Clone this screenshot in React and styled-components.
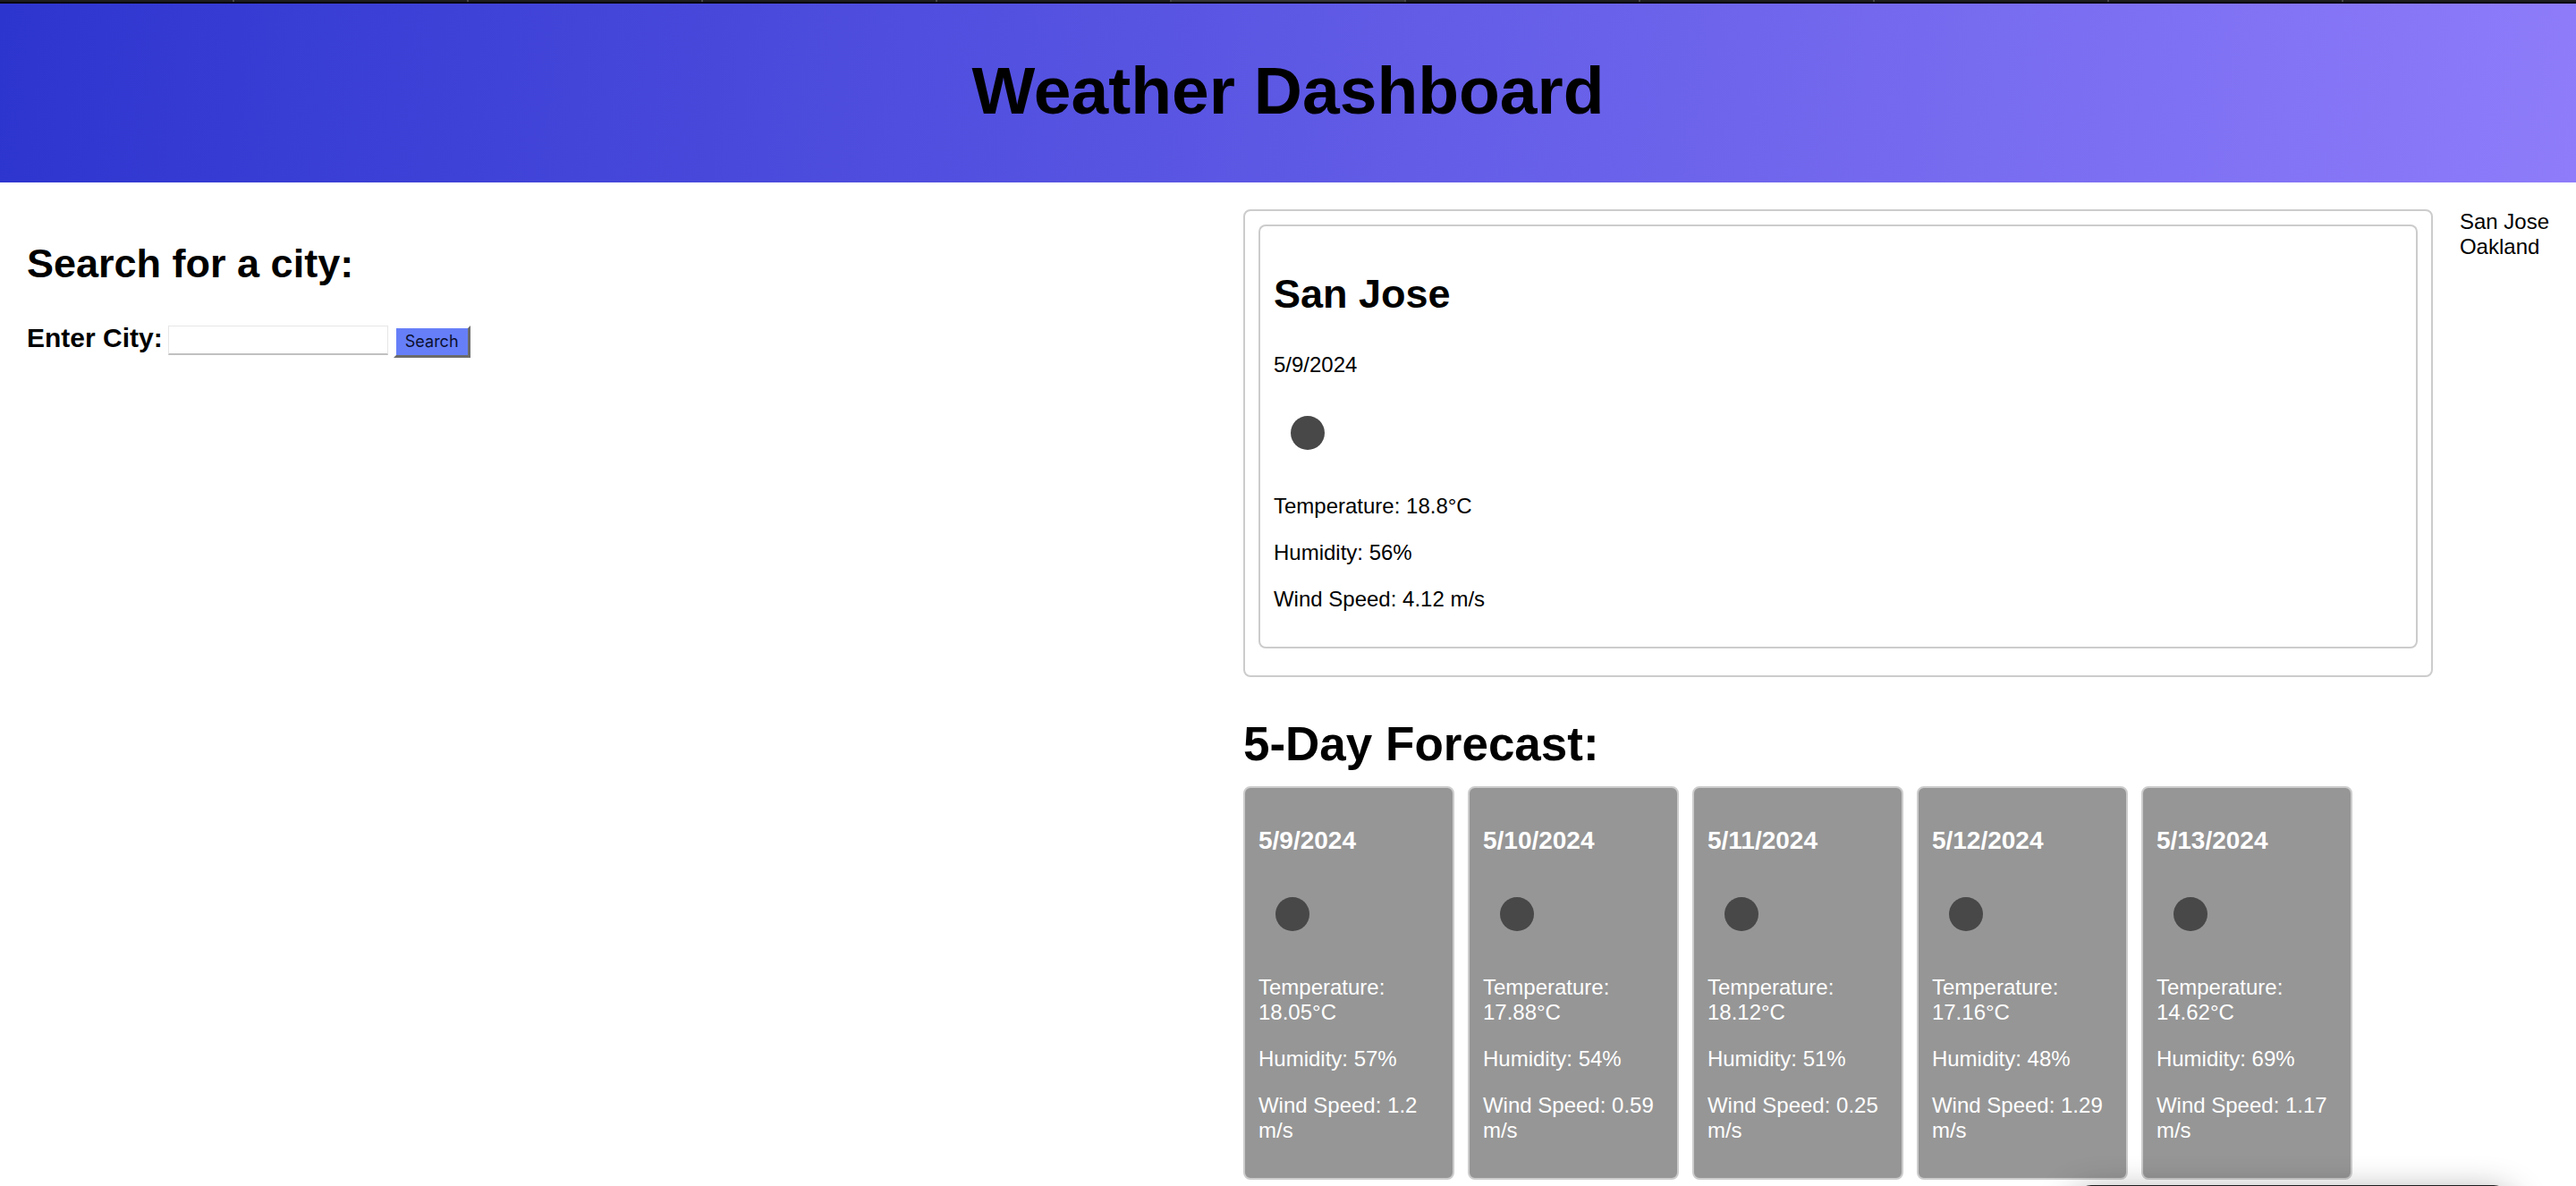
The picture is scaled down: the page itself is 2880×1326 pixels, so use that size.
import React, { useState } from "react";
import styled, { createGlobalStyle } from "styled-components";

const GlobalStyle = createGlobalStyle`
  * { box-sizing: border-box; }
  body {
    margin: 0;
    overflow: hidden auto;
    background: #fff;
    color: #000;
    font: 24px/28px Arial, "Liberation Sans", sans-serif;
  }
`;

const TabStrip = styled.div`
  display: flex;
  height: 4px;
  background: #1e1e1e;
  border-bottom: 2px solid #08080c;
`;

const Tab = styled.span`
  flex: 1;
  border-right: 2px solid #484848;
  background: ${({ $active }) => ($active ? "#353535" : "#1e1e1e")};

  &:last-child { border-right: 0; }
`;

const Header = styled.header`
  padding: 54px 30px 60px;
  background: linear-gradient(95deg, #2d35cf, #8e7cfa);
  text-align: center;
`;

const Title = styled.h1`
  margin: 0;
  font-size: 75px;
  line-height: 86px;
`;

const Page = styled.main`
  display: flex;
  align-items: flex-start;
  gap: 30px;
  padding: 30px 30px 0;
`;

const Column = styled.section`
  flex: 1;
  min-width: 0;
`;

const Heading = styled.h2`
  margin: 35px 0 39px;
  font-size: 45px;
  line-height: 52px;
`;

const SearchForm = styled.form`
  display: flex;
  align-items: flex-start;
  gap: 6px;
`;

const Label = styled.label`
  font-size: 30px;
  font-weight: bold;
  line-height: 36px;
`;

const CityInput = styled.input`
  width: 246px;
  height: 33px;
  margin: 4px 0 0;
  padding: 2px 6px;
  border: 1px solid #e6e6e6;
  border-bottom: 2px solid #c0c0c0;
  background: #fff;
  font: inherit;
  font-size: 20px;
  outline: none;
`;

const SearchButton = styled.button`
  width: 86px;
  height: 36px;
  margin: 4px 0 0;
  padding: 0;
  border: 3px solid;
  border-color: #fff #6b6b6b #6b6b6b #fff;
  background: #667ff8;
  color: #0c1030;
  font: 18px/22px Inter, sans-serif;
`;

const Panel = styled.div`
  padding: 15px;
  border: 2px solid #ccc;
  border-radius: 8px;
`;

const Current = styled(Panel)`
  margin-bottom: 15px;
`;

const Text = styled.p`
  margin: 24px 0;
`;

const IconBox = styled.div`
  height: 82px;

  svg { display: block; }
`;

const ForecastTitle = styled.h2`
  margin: 45px 0 17px;
  font-size: 53px;
  line-height: 60px;
`;

const Forecast = styled.div`
  display: grid;
  grid-template-columns: repeat(5, calc(20% - 30px));
  gap: 15px;
`;

const DayCard = styled(Panel)`
  background: #969696;
  color: #fff;
`;

const DayTitle = styled.h3`
  margin: 28px 0;
  font-size: 28px;
  line-height: 32px;
`;

const History = styled.aside`
  flex: none;
`;

const FloatingWindow = styled.div`
  position: fixed;
  right: 72px;
  bottom: -59px;
  width: 490px;
  height: 60px;
  border-radius: 20px;
  background: #1e1e20;
  box-shadow: 0 12px 40px rgba(0, 0, 0, 0.45);
`;

const days = [
  { date: "5/9/2024", temperature: "18.05", humidity: 57, wind: "1.2" },
  { date: "5/10/2024", temperature: "17.88", humidity: 54, wind: "0.59" },
  { date: "5/11/2024", temperature: "18.12", humidity: 51, wind: "0.25" },
  { date: "5/12/2024", temperature: "17.16", humidity: 48, wind: "1.29" },
  { date: "5/13/2024", temperature: "14.62", humidity: 69, wind: "1.17" },
];

const tabs = Array.from({ length: 11 }, (_, index) => index);

function ClearNightIcon() {
  return (
    <IconBox>
      <svg width="76" height="76" viewBox="0 0 76 76" role="img" aria-label="Clear sky">
        <circle cx="38" cy="38" r="19" fill="#484849" />
      </svg>
    </IconBox>
  );
}

function Readings({ temperature, humidity, wind }) {
  return (
    <>
      <Text>Temperature: {temperature}°C</Text>
      <Text>Humidity: {humidity}%</Text>
      <Text>Wind Speed: {wind} m/s</Text>
    </>
  );
}

export default function App() {
  const [city, setCity] = useState("");

  return (
    <>
      <GlobalStyle />
      <TabStrip>
        {tabs.map((tab) => (
          <Tab key={tab} $active={tab === 5} />
        ))}
      </TabStrip>
      <Header>
        <Title>Weather Dashboard</Title>
      </Header>
      <Page>
        <Column>
          <Heading>Search for a city:</Heading>
          <SearchForm onSubmit={(event) => event.preventDefault()}>
            <Label htmlFor="city">Enter City:</Label>
            <CityInput
              id="city"
              type="text"
              value={city}
              onChange={(event) => setCity(event.target.value)}
            />
            <SearchButton type="submit">Search</SearchButton>
          </SearchForm>
        </Column>
        <Column>
          <Panel>
            <Current>
              <Heading>San Jose</Heading>
              <Text>5/9/2024</Text>
              <ClearNightIcon />
              <Readings temperature="18.8" humidity={56} wind="4.12" />
            </Current>
          </Panel>
          <ForecastTitle>5-Day Forecast:</ForecastTitle>
          <Forecast>
            {days.map(({ date, ...readings }) => (
              <DayCard key={date}>
                <DayTitle>{date}</DayTitle>
                <ClearNightIcon />
                <Readings {...readings} />
              </DayCard>
            ))}
          </Forecast>
        </Column>
        <History>
          <div>San Jose</div>
          <div>Oakland</div>
        </History>
      </Page>
      <FloatingWindow />
    </>
  );
}
